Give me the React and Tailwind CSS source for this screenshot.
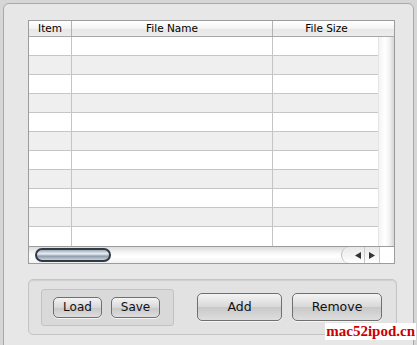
import React from "react";

const rows = Array.from({ length: 11 });

function Btn({ children, w, h, cls = "" }) {
  return (
    <div
      className={`flex items-center justify-center rounded-[5px] border border-[#6f6f6f] bg-[linear-gradient(#f4f4f4,#d8d8d8_50%,#c8c8c8_51%,#dedede)] text-[#111] shadow-[0_1px_0_#f5f5f5] ${cls}`}
      style={{ width: w, height: h }}
    >
      {children}
    </div>
  );
}

export default function App() {
  return (
    <div className="relative h-[345px] w-[417px] overflow-hidden bg-[#d6d6d6] font-['DejaVu_Sans',sans-serif]">
      <div className="ml-[3px] mt-[3px] h-[360px] w-[411px] rounded-[6px] border border-[#a9a9a9] bg-[#e7e7e7] pl-[24px] pt-[16px]">
        {/* table */}
        <div className="w-[367px] border border-[#9c9c9c] bg-white">
          <div className="flex h-[16px] border-b border-[#a8a8a8] bg-[linear-gradient(#ffffff,#f3f3f3_50%,#e6e6e6_51%,#ededed)] text-[10.5px] leading-[15px] text-black">
            <div className="w-[43px] border-r border-[#b4b4b4] text-center">Item</div>
            <div className="w-[201px] border-r border-[#b4b4b4] text-center">File Name</div>
            <div className="flex-1 pr-[14px] text-center">File Size</div>
          </div>
          <div className="flex">
            <div className="w-[350px]">
              {rows.map((_, i) => (
                <div
                  key={i}
                  className={`flex h-[19px] border-b border-[#c6c6c6] ${i % 2 === 1 ? "bg-[#efefef]" : "bg-white"} ${i === 10 ? "border-b-0" : ""}`}
                >
                  <div className="w-[43px] border-r border-[#c4c4c4]" />
                  <div className="w-[201px] border-r border-[#c4c4c4]" />
                  <div className="flex-1" />
                </div>
              ))}
            </div>
            <div className="w-[16px] border-l border-[#e4e4e4] bg-[linear-gradient(90deg,#f4f4f4,#ffffff_40%,#f2f2f2_70%,#d6d6d6)]" />
          </div>
          {/* horizontal scrollbar */}
          <div className="flex h-[17px] border-t border-[#9c9c9c]">
            <div className="relative flex w-[350px] items-center bg-[linear-gradient(#dcdcdc,#f8f8f8_40%,#ffffff_60%,#f2f2f2)]">
              <div className="ml-[6px] h-[14px] w-[76px] rounded-full border-[2px] border-[#313a44] bg-[linear-gradient(#9eabb8,#e4eaf0_35%,#c4ced8_50%,#8e9caa_60%,#c9d3dc)]" />
              <div className="absolute right-0 top-0 flex h-full items-center">
                <div className="h-full w-[10px] rounded-l-full border-l border-[#bdbdbd] bg-[linear-gradient(#e8e8e8,#ffffff)]" />
                <div className="flex h-full w-[14px] items-center justify-center border-r border-[#c8c8c8] bg-[linear-gradient(#e8e8e8,#ffffff)]">
                  <svg width="6" height="7" viewBox="0 0 6 7"><path d="M0 3.5L6 0V7Z" fill="#333" /></svg>
                </div>
                <div className="flex h-full w-[14px] items-center justify-center bg-[linear-gradient(#e8e8e8,#ffffff)]">
                  <svg width="6" height="7" viewBox="0 0 6 7"><path d="M6 3.5L0 0V7Z" fill="#333" /></svg>
                </div>
              </div>
            </div>
            <div className="flex-1 border-l border-[#c8c8c8] bg-white" />
          </div>
        </div>

        {/* bottom group */}
        <div className="mt-[15px] flex h-[56px] w-[369px] items-center rounded-[5px] border border-[#c4c4c4] bg-[#e2e2e2] pl-[12px] shadow-[inset_0_1px_1px_#d0d0d0]">
          <div className="flex h-[37px] w-[133px] items-center gap-[9px] rounded-[3px] border border-[#c2c2c2] bg-[#d9d9d9] pl-[11px]">
            <Btn w={49} h={21} cls="text-[12px]">Load</Btn>
            <Btn w={49} h={21} cls="text-[12px]">Save</Btn>
          </div>
          <Btn w={85} h={28} cls="ml-[23px] text-[12.5px]">Add</Btn>
          <Btn w={90} h={28} cls="ml-[10px] text-[12.5px]">Remove</Btn>
        </div>
      </div>

      <div className="absolute bottom-[5px] right-[1px] bg-white px-[1px] font-['Liberation_Serif',serif] text-[15px] font-bold leading-[17px] text-[#cc0000]">
        mac52ipod.cn
      </div>
    </div>
  );
}
